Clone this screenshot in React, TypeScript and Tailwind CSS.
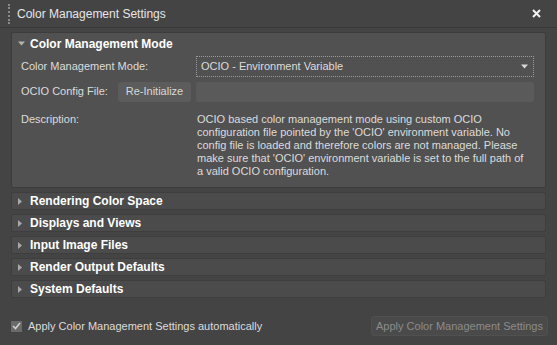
import { useState } from 'react'

const sections = [
  'Rendering Color Space',
  'Displays and Views',
  'Input Image Files',
  'Render Output Defaults',
  'System Defaults',
]

function Caret({ open }: { open?: boolean }) {
  return open ? (
    <svg width="7" height="7" viewBox="0 0 7 7" className="shrink-0">
      <path d="M0 1.5h7L3.5 5.5z" fill="#b4b4b4" />
    </svg>
  ) : (
    <svg width="4" height="7" viewBox="0 0 4 7" className="shrink-0">
      <path d="M0 0v7L4 3.5z" fill="#a8a8a8" />
    </svg>
  )
}

export default function App() {
  const [auto, setAuto] = useState(true)

  return (
    <div className="w-[557px] h-[345px] bg-[#444444] flex flex-col font-['Liberation_Sans',Arial,sans-serif] text-[11px] text-[#dcdcdc] overflow-hidden">
      {/* title bar */}
      <div className="h-[28px] flex items-center border-b border-[#383838] shrink-0">
        <div className="ml-[8px] h-[20px] border-l-2 border-dotted border-[#8a8a8a]" />
        <span className="ml-[7px] text-[12px] text-[#e6e6e6]">Color Management Settings</span>
        <button className="ml-auto mr-[16px] text-[#f0f0f0]">
          <svg width="9" height="9" viewBox="0 0 9 9">
            <path d="M1 1l7 7M8 1L1 8" stroke="#f2f2f2" strokeWidth="2" />
          </svg>
        </button>
      </div>

      <div className="flex-1 flex flex-col pl-[11px] pr-[11px] pt-[4px]">
        {/* main panel */}
        <div className="bg-[#515151] rounded-[2px] border border-[#3c3c3c] flex flex-col">
          <div className="h-[21px] flex items-center gap-[5px] pl-[6px]">
            <Caret open />
            <span className="font-bold text-[12px] text-white">Color Management Mode</span>
          </div>
          <div className="flex flex-col pl-[9px] pr-[11px] pt-[2px] pb-[9px]">
            <div className="flex items-center h-[21px]">
              <span className="w-[175px]">Color Management Mode:</span>
              <div className="flex-1 h-[21px] border border-dotted border-[#9a9a9a] bg-[#515151] flex items-center pl-[4px] pr-[5px]">
                <span>OCIO - Environment Variable</span>
                <svg width="7" height="5" viewBox="0 0 7 5" className="ml-auto">
                  <path d="M0 0.5h7L3.5 4.5z" fill="#d8d8d8" />
                </svg>
              </div>
            </div>
            <div className="flex items-center h-[21px] mt-[4px]">
              <span className="w-[97px]">OCIO Config File:</span>
              <button className="h-[20px] w-[73px] bg-[#5c5c5c] rounded-[3px] text-[#d8d8d8]">Re-Initialize</button>
              <div className="flex-1 h-[20px] ml-[5px] bg-[#5a5a5a] rounded-[2px]" />
            </div>
            <div className="flex mt-[11px]">
              <span className="w-[176px] shrink-0 leading-[13px]">Description:</span>
              <p className="leading-[13px] pr-[2px]">
                OCIO based color management mode using custom OCIO configuration file pointed by the 'OCIO'
                environment variable. No config file is loaded and therefore colors are not managed. Please
                make sure that 'OCIO' environment variable is set to the full path of a valid OCIO configuration.
              </p>
            </div>
          </div>
        </div>

        {/* collapsed sections */}
        <div className="flex flex-col gap-[4px] mt-[4px]">
          {sections.map((s) => (
            <div
              key={s}
              className="h-[18px] bg-[#4b4b4b] rounded-[2px] border border-[#3e3e3e] flex items-center gap-[8px] pl-[6px]"
            >
              <Caret />
              <span className="font-bold text-[12px] text-white">{s}</span>
            </div>
          ))}
        </div>

        {/* footer */}
        <div className="mt-auto mb-[9px] flex items-center">
          <label className="flex items-center gap-[6px] cursor-pointer" onClick={() => setAuto(!auto)}>
            <span className="w-[11px] h-[11px] bg-[#6a6a6a] flex items-center justify-center">
              {auto && (
                <svg width="9" height="8" viewBox="0 0 9 8">
                  <path d="M1 4l2.5 2.5L8 1" stroke="#d0d0d0" strokeWidth="1.6" fill="none" />
                </svg>
              )}
            </span>
            <span>Apply Color Management Settings automatically</span>
          </label>
          <button
            disabled
            className="ml-auto -mr-[2px] h-[20px] w-[177px] bg-[#4a4a4a] border border-[#505050] rounded-[3px] text-[#8c8c8c]"
          >
            Apply Color Management Settings
          </button>
        </div>
      </div>
    </div>
  )
}
